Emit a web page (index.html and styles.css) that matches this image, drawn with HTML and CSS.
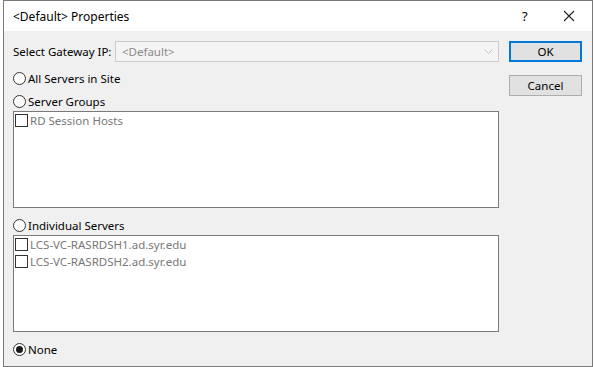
FILE: index.html
```html
<!DOCTYPE html>
<html>
<head>
<meta charset="utf-8">
<link rel="stylesheet" href="styles.css">
</head>
<body>
<div class="window">
  <div class="titlebar">
    <span class="title">&lt;Default&gt; Properties</span>
    <span class="help">?</span>
    <span class="close"><svg width="12" height="12" viewBox="0 0 12 12"><path d="M1 1L11 11M11 1L1 11" stroke="#222" stroke-width="1.1" fill="none"/></svg></span>
  </div>
  <div class="content">
    <div class="main">
      <div class="gateway">
        <span class="label">Select Gateway IP:</span>
        <div class="combo">
          <span class="combo-text">&lt;Default&gt;</span>
          <svg class="arrow" width="9" height="5" viewBox="0 0 9 5"><path d="M0.5 0.5L4.5 4.5L8.5 0.5" stroke="#c4c4c4" fill="none"/></svg>
        </div>
      </div>
      <div class="radio-row first"><span class="radio"></span><span>All Servers in Site</span></div>
      <div class="radio-row"><span class="radio"></span><span>Server Groups</span></div>
      <div class="listbox">
        <div class="item"><span class="check"></span><span>RD Session Hosts</span></div>
      </div>
      <div class="radio-row gap"><span class="radio"></span><span>Individual Servers</span></div>
      <div class="listbox">
        <div class="item"><span class="check"></span><span>LCS-VC-RASRDSH1.ad.syr.edu</span></div>
        <div class="item"><span class="check"></span><span>LCS-VC-RASRDSH2.ad.syr.edu</span></div>
      </div>
      <div class="radio-row gap"><span class="radio on"></span><span>None</span></div>
    </div>
    <div class="buttons">
      <div class="btn default">OK</div>
      <div class="btn">Cancel</div>
    </div>
  </div>
</div>
</body>
</html>
```

FILE: styles.css
```css
html, body {
  margin: 0;
  padding: 0;
  background: #ffffff;
}
body {
  font-family: "Noto Sans", "Open Sans", sans-serif;
  font-size: 11.5px;
  color: #000;
}
.window {
  margin-left: 3px;
  width: 588px;
  height: 365px;
  border: 1px solid #7a7a7a;
  background: #f0f0f0;
  display: flex;
  flex-direction: column;
}
.titlebar {
  height: 30px;
  background: #ffffff;
  display: flex;
  align-items: center;
  padding-left: 9px;
}
.title {
  flex: 1;
  font-size: 12px;
}
.help {
  width: 14px;
  font-size: 13px;
  margin-right: 27px;
}
.close {
  display: flex;
  margin-right: 17px;
}
.content {
  display: flex;
  padding: 10px 0 0 9px;
}
.main {
  width: 486px;
  display: flex;
  flex-direction: column;
}
.gateway {
  display: flex;
  align-items: center;
  height: 21px;
}
.label {
  width: 102px;
}
.combo {
  flex: 1;
  height: 19px;
  border: 1px solid #cccccc;
  background: #f4f4f4;
  display: flex;
  align-items: center;
  padding-left: 6px;
  color: #8a8a8a;
}
.combo-text {
  flex: 1;
}
.arrow {
  margin-right: 5px;
}
.radio-row {
  height: 16px;
  display: flex;
  align-items: center;
  margin-top: 7px;
}
.radio-row.first {
  margin-top: 8px;
}
.radio-row.gap {
  margin-top: 9px;
}
.radio {
  width: 11px;
  height: 11px;
  border: 1px solid #333333;
  border-radius: 50%;
  background: #fff;
  margin-right: 2px;
  display: flex;
  align-items: center;
  justify-content: center;
}
.radio.on::after {
  content: "";
  width: 7px;
  height: 7px;
  border-radius: 50%;
  background: #1a1a1a;
}
.listbox {
  margin-top: 2px;
  border: 1px solid #7a7a7a;
  background: #ffffff;
  padding: 0 0 0 1px;
  height: 95px;
  color: #777777;
}
.item {
  height: 17px;
  display: flex;
  align-items: center;
}
.check {
  width: 11px;
  height: 11px;
  border: 1px solid #333333;
  background: #fff;
  margin-right: 2px;
}
.buttons {
  margin-left: 10px;
  display: flex;
  flex-direction: column;
  gap: 13px;
}
.btn {
  width: 71px;
  height: 19px;
  border: 1px solid #adadad;
  background: #e1e1e1;
  display: flex;
  align-items: center;
  justify-content: center;
}
.btn.default {
  border: 2px solid #0078d7;
  width: 69px;
  height: 17px;
}
```
